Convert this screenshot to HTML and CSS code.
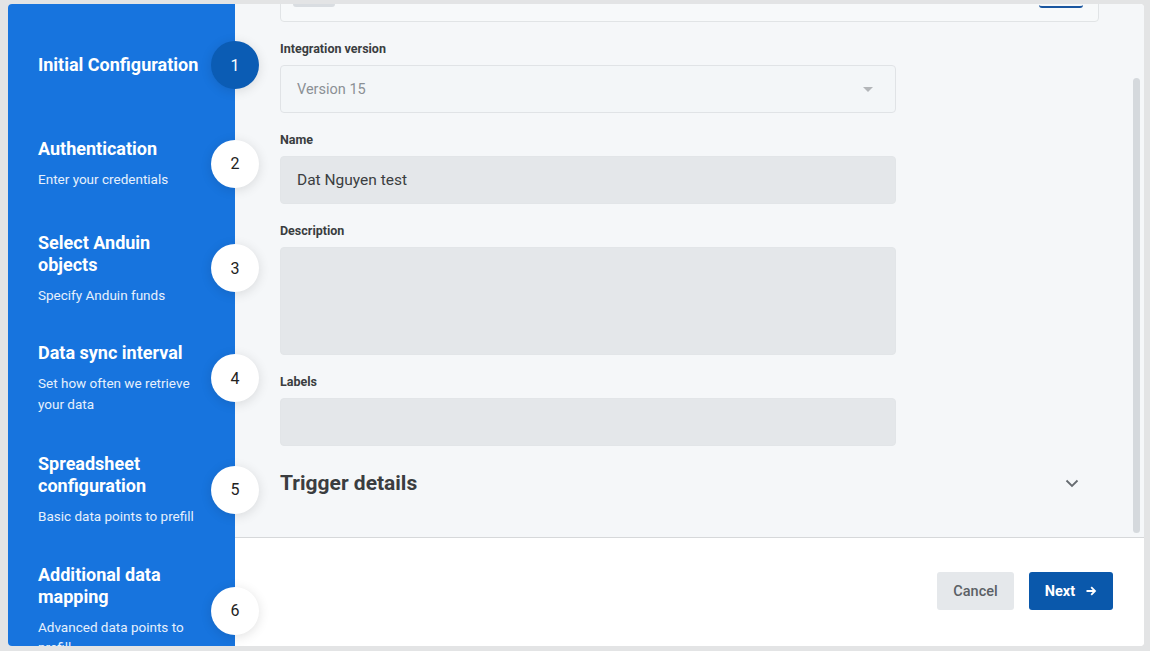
FILE: index.html
```html
<!DOCTYPE html>
<html lang="en">
<head>
<meta charset="utf-8">
<title>Integration setup</title>
<link rel="stylesheet" href="styles.css">
</head>
<body>
<div class="modal">
  <aside class="sidebar">
    <div class="step step-1">
      <div class="step-text">
        <div class="step-title">Initial Configuration</div>
      </div>
      <div class="circle active">1</div>
    </div>
    <div class="step step-2">
      <div class="step-text">
        <div class="step-title">Authentication</div>
        <div class="step-sub">Enter your credentials</div>
      </div>
      <div class="circle">2</div>
    </div>
    <div class="step">
      <div class="step-text">
        <div class="step-title">Select Anduin objects</div>
        <div class="step-sub">Specify Anduin funds</div>
      </div>
      <div class="circle">3</div>
    </div>
    <div class="step step-4">
      <div class="step-text">
        <div class="step-title">Data sync interval</div>
        <div class="step-sub">Set how often we retrieve your data</div>
      </div>
      <div class="circle">4</div>
    </div>
    <div class="step">
      <div class="step-text">
        <div class="step-title">Spreadsheet configuration</div>
        <div class="step-sub">Basic data points to prefill</div>
      </div>
      <div class="circle">5</div>
    </div>
    <div class="step">
      <div class="step-text">
        <div class="step-title">Additional data mapping</div>
        <div class="step-sub">Advanced data points to prefill</div>
      </div>
      <div class="circle">6</div>
    </div>
  </aside>
  <main class="main">
    <div class="scroll">
      <div class="form">
        <div class="top-card">
          <span class="top-toggle"></span>
          <span class="top-btn"></span>
        </div>
        <div class="field">
          <div class="label">Integration version</div>
          <div class="input select">
            <span class="placeholder">Version 15</span>
            <span class="caret"></span>
          </div>
        </div>
        <div class="field">
          <div class="label">Name</div>
          <div class="input filled">Dat Nguyen test</div>
        </div>
        <div class="field">
          <div class="label">Description</div>
          <div class="input filled textarea"></div>
        </div>
        <div class="field">
          <div class="label">Labels</div>
          <div class="input filled"></div>
        </div>
        <div class="section">
          <h2 class="section-title">Trigger details</h2>
          <svg class="chevron" width="14" height="9" viewBox="0 0 14 9"><path d="M1.5 1.5 L7 7 L12.5 1.5" fill="none" stroke="#666b70" stroke-width="1.8"/></svg>
        </div>
      </div>
      <div class="scrollbar"></div>
    </div>
    <footer class="footer">
      <button class="btn cancel">Cancel</button>
      <button class="btn next">Next
        <svg width="12" height="12" viewBox="0 0 12 12"><path d="M1.5 6 H10 M6.2 2.2 L10 6 L6.2 9.8" fill="none" stroke="#fff" stroke-width="1.8"/></svg>
      </button>
    </footer>
  </main>
</div>
</body>
</html>
```

FILE: styles.css
```css
* { box-sizing: border-box; }

html, body {
  margin: 0;
  padding: 0;
  height: 100%;
}

body {
  background: #e3e4e5;
  font-family: Roboto, "Liberation Sans", Arial, sans-serif;
  overflow: hidden;
}

.modal {
  margin: 4px 6px 0 8px;
  width: 1136px;
  height: 642px;
  display: flex;
  border-radius: 4px;
  overflow: hidden;
  background: #fff;
}

.sidebar {
  width: 227px;
  flex: none;
  background: #1774de;
  padding: 37px 0 0 30px;
  display: flex;
  flex-direction: column;
  gap: 37px;
  position: relative;
  z-index: 2;
  overflow: visible;
}

.step {
  display: flex;
  align-items: center;
}

.step-1 { margin-bottom: 12px; }
.step-2 { margin-bottom: 5px; }
.step-4 { margin-bottom: 2px; }

.step-text {
  flex: 1;
  min-width: 0;
  padding-right: 2px;
}

.step-title {
  color: #fff;
  font-size: 18px;
  font-weight: 700;
  line-height: 22px;
}

.step-sub {
  color: #e6f0fc;
  font-size: 13.5px;
  line-height: 20.5px;
  margin-top: 9px;
}

.circle {
  flex: none;
  width: 48px;
  height: 48px;
  border-radius: 50%;
  background: #fff;
  color: #222;
  font-size: 16px;
  display: flex;
  align-items: center;
  justify-content: center;
  margin-right: -24px;
  box-shadow: 0 2px 12px rgba(0, 0, 0, 0.12);
}

.circle.active {
  background: #0b5cb4;
  color: #fff;
}

.main {
  flex: 1;
  display: flex;
  flex-direction: column;
  min-width: 0;
}

.scroll {
  height: 534px;
  flex: none;
  background: #f5f7f9;
  border-bottom: 1px solid #d6d8da;
  position: relative;
  overflow: hidden;
}

.form {
  padding: 0 45px;
}

.top-card {
  width: 819px;
  height: 48px;
  margin-top: -30px;
  margin-bottom: 19px;
  border: 1px solid #e1e4e6;
  border-radius: 4px;
  background: #f7f9fa;
  position: relative;
}

.top-toggle {
  position: absolute;
  left: 12px;
  top: 26px;
  width: 42px;
  height: 6px;
  border-radius: 3px;
  background: #d9dde1;
}

.top-btn {
  position: absolute;
  left: 758px;
  top: 0;
  width: 44px;
  height: 33px;
  border-radius: 0 0 3px 3px;
  border-bottom: 2px solid #1a56a0;
}

.field {
  margin-bottom: 19px;
  width: 616px;
}

.label {
  font-size: 12.5px;
  font-weight: 700;
  color: #3a3d40;
  line-height: 16px;
  margin-bottom: 8px;
}

.input {
  height: 48px;
  border-radius: 4px;
  border: 1px solid #e0e3e6;
  padding: 0 16px;
  display: flex;
  align-items: center;
  font-size: 15.5px;
  color: #3b3e41;
}

.input.select {
  background: #f3f6f8;
  justify-content: space-between;
}

.placeholder {
  color: #8b9095;
  font-size: 14.5px;
}

.caret {
  width: 0;
  height: 0;
  border-left: 5px solid transparent;
  border-right: 5px solid transparent;
  border-top: 5px solid #b3b6b9;
  margin-right: 6px;
}

.input.filled {
  background: #e4e7ea;
  border-color: #e2e5e8;
}

.input.textarea {
  height: 108px;
}

.section {
  width: 805px;
  display: flex;
  align-items: center;
  justify-content: space-between;
  margin-top: 24px;
}

.section-title {
  margin: 0;
  font-size: 21px;
  font-weight: 700;
  color: #3b3d40;
  line-height: 26px;
}

.chevron {
  margin-right: 6px;
}

.scrollbar {
  position: absolute;
  right: 4px;
  top: 74px;
  width: 7px;
  height: 455px;
  border-radius: 4px;
  background: #d5d9dd;
}

.footer {
  flex: 1;
  background: #fff;
  display: flex;
  align-items: center;
  justify-content: flex-end;
  gap: 15px;
  padding: 0 31px 2px 0;
}

.btn {
  height: 38px;
  border: none;
  border-radius: 3px;
  font-family: Roboto, "Liberation Sans", Arial, sans-serif;
  font-size: 14.5px;
  font-weight: 500;
  display: flex;
  align-items: center;
  justify-content: center;
  cursor: pointer;
}

.cancel {
  width: 77px;
  background: #e5e8eb;
  color: #5b6065;
}

.next {
  width: 84px;
  background: #0a58ab;
  color: #fff;
  font-weight: 700;
  gap: 10px;
}
```
